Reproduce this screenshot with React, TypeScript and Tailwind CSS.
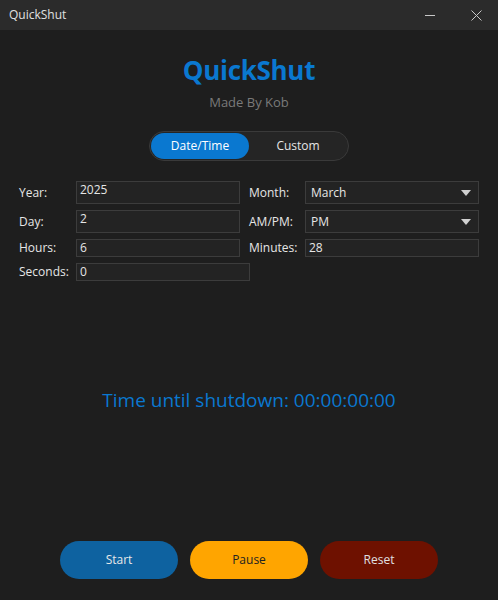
import React from "react";

const font = { fontFamily: '"Open Sans", "Noto Sans", sans-serif' };

function Field({ value, className }: { value: string; className: string }) {
  return (
    <div className={`border border-[#3c3c3c] bg-[#232323] text-[12px] text-[#e6e6e6] pl-[3px] leading-[14px] pt-[1px] ${className}`}>
      {value}
    </div>
  );
}

function Select({ value }: { value: string }) {
  return (
    <div className="h-[23px] w-[174px] border border-[#3c3c3c] bg-[#232323] text-[12px] text-[#e6e6e6] pl-[5px] flex items-center justify-between pr-[7px]">
      <span>{value}</span>
      <svg width="10" height="6" viewBox="0 0 10 6"><path d="M0 0 H10 L5 6 Z" fill="#d0d0d0" /></svg>
    </div>
  );
}

export default function App() {
  return (
    <div className="w-[498px] h-[600px] bg-[#1e1e1e] flex flex-col overflow-hidden" style={font}>
      <div className="h-[30px] bg-[#2b2b2b] flex items-center pl-[9px] text-[12px] text-[#e0e0e0] shrink-0">
        <span>QuickShut</span>
        <div className="ml-auto flex items-center">
          <div className="w-[10px] h-[1px] bg-[#c8c8c8] mr-[36px]" />
          <svg width="11" height="11" viewBox="0 0 11 11" className="mr-[16px]">
            <path d="M0.5 0.5 L10.5 10.5 M10.5 0.5 L0.5 10.5" stroke="#c8c8c8" strokeWidth="1" />
          </svg>
        </div>
      </div>
      <div className="flex flex-col items-center pt-[24px]">
        <div className="text-[26px] font-bold text-[#0a78d0] leading-[32px] tracking-[-0.3px]">QuickShut</div>
        <div className="text-[13px] text-[#7a7a7a] mt-[7px] leading-[18px]">Made By Kob</div>
        <div className="mt-[20px] w-[200px] h-[30px] rounded-full border border-[#3a3a3a] bg-[#252525] flex items-center px-[1px]">
          <div className="w-[98px] h-[26px] rounded-full bg-[#0a78d0] text-white text-[12px] flex items-center justify-center">Date/Time</div>
          <div className="flex-1 text-[12px] text-[#e6e6e6] flex items-center justify-center">Custom</div>
        </div>
      </div>
      <div className="mt-[20px] pl-[19px] grid grid-cols-[57px_164px_65px_174px] items-center text-[12px] text-[#e6e6e6]" style={{ rowGap: 6 }}>
        <span>Year:</span>
        <Field value="2025" className="h-[23px] w-[164px]" />
        <span className="pl-[9px]">Month:</span>
        <Select value="March" />
        <span>Day:</span>
        <Field value="2" className="h-[23px] w-[164px]" />
        <span className="pl-[9px]">AM/PM:</span>
        <Select value="PM" />
        <span>Hours:</span>
        <Field value="6" className="h-[18px] w-[164px]" />
        <span className="pl-[9px]">Minutes:</span>
        <Field value="28" className="h-[18px] w-[174px]" />
        <span>Seconds:</span>
        <Field value="0" className="h-[18px] w-[174px]" />
      </div>
      <div className="mt-[105px] text-center text-[19px] text-[#0a78d0]">Time until shutdown: 00:00:00:00</div>
      <div className="mt-auto mb-[21px] flex justify-center gap-[12px] text-[12px]">
        <div className="w-[118px] h-[38px] rounded-full bg-[#0e62a0] text-[#e8e8e8] flex items-center justify-center">Start</div>
        <div className="w-[118px] h-[38px] rounded-full bg-[#ffa500] text-[#222] flex items-center justify-center">Pause</div>
        <div className="w-[118px] h-[38px] rounded-full bg-[#6e1100] text-[#e0e0e0] flex items-center justify-center">Reset</div>
      </div>
    </div>
  );
}
